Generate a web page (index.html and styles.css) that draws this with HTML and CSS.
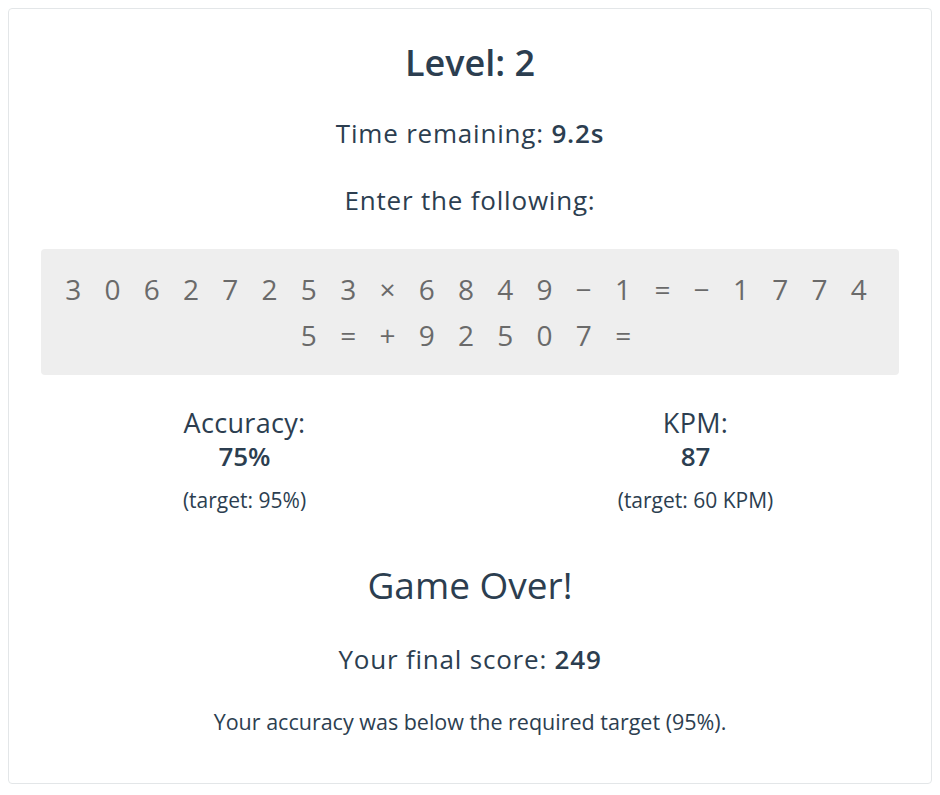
FILE: index.html
```html
<!DOCTYPE html>
<html lang="en">
<head>
    <meta charset="UTF-8">
    <meta name="viewport" content="width=device-width, initial-scale=1.0">
    <title>Math Typing Game</title>
    <link rel="stylesheet" href="styles.css">
</head>
<body>
    <div class="game">
        <h2 class="level">Level: 2</h2>
        <p class="timer">Time remaining: <strong>9.2s</strong></p>
        <p class="prompt">Enter the following:</p>

        <div class="expression">3 0 6 2 7 2 5 3 × 6 8 4 9 − 1 = − 1 7 7 4 5 = + 9 2 5 0 7 =</div>

        <div class="stats">
            <div class="stat">
                <div class="stat-label">Accuracy:</div>
                <div class="stat-value">75%</div>
                <div class="stat-target">(target: 95%)</div>
            </div>
            <div class="stat">
                <div class="stat-label">KPM:</div>
                <div class="stat-value">87</div>
                <div class="stat-target">(target: 60 KPM)</div>
            </div>
        </div>

        <div class="game-over">
            <h3>Game Over!</h3>
            <p class="final-score">Your final score: <strong>249</strong></p>
            <p class="reason">Your accuracy was below the required target (95%).</p>
        </div>
    </div>
</body>
</html>
```

FILE: styles.css
```css
body {
    margin: 8px;
    font-family: 'Open Sans', 'Noto Sans', sans-serif;
    color: #2c3e50;
    background: #fff;
}

.game {
    border: 1px solid #e3e6e8;
    border-radius: 4px;
    height: 776px;
    box-sizing: border-box;
    padding: 26px 32px 0;
    text-align: center;
}

.level {
    font-size: 36px;
    font-weight: 600;
    margin: 0;
    line-height: 56px;
}

.timer,
.prompt,
.final-score {
    font-size: 26px;
    letter-spacing: 0.8px;
    line-height: 40px;
}

.timer {
    margin: 22px 0 0;
}

strong {
    font-weight: 600;
}

.prompt {
    margin: 27px 0 0;
}

.expression {
    margin-top: 29px;
    background-color: #eeeeee;
    border-radius: 4px;
    padding: 17px 20px;
    color: #6a6a6a;
    font-size: 28px;
    line-height: 46px;
    letter-spacing: 8px;
}

.stats {
    display: grid;
    grid-template-columns: 1fr 1fr;
    margin: 31px -22px 0;
}

.stat-label {
    font-size: 27px;
    letter-spacing: 0.3px;
    line-height: 34px;
}

.stat-value {
    font-size: 26px;
    font-weight: 600;
    line-height: 32px;
}

.stat-target {
    font-size: 21px;
    margin-top: 15px;
    line-height: 26px;
}

.game-over h3 {
    font-size: 37px;
    font-weight: 400;
    margin: 47px 0 0;
    line-height: 50px;
}

.final-score {
    margin: 29px 0 0;
}

.reason {
    font-size: 21.5px;
    margin: 28px 0 0;
    line-height: 30px;
}
```
